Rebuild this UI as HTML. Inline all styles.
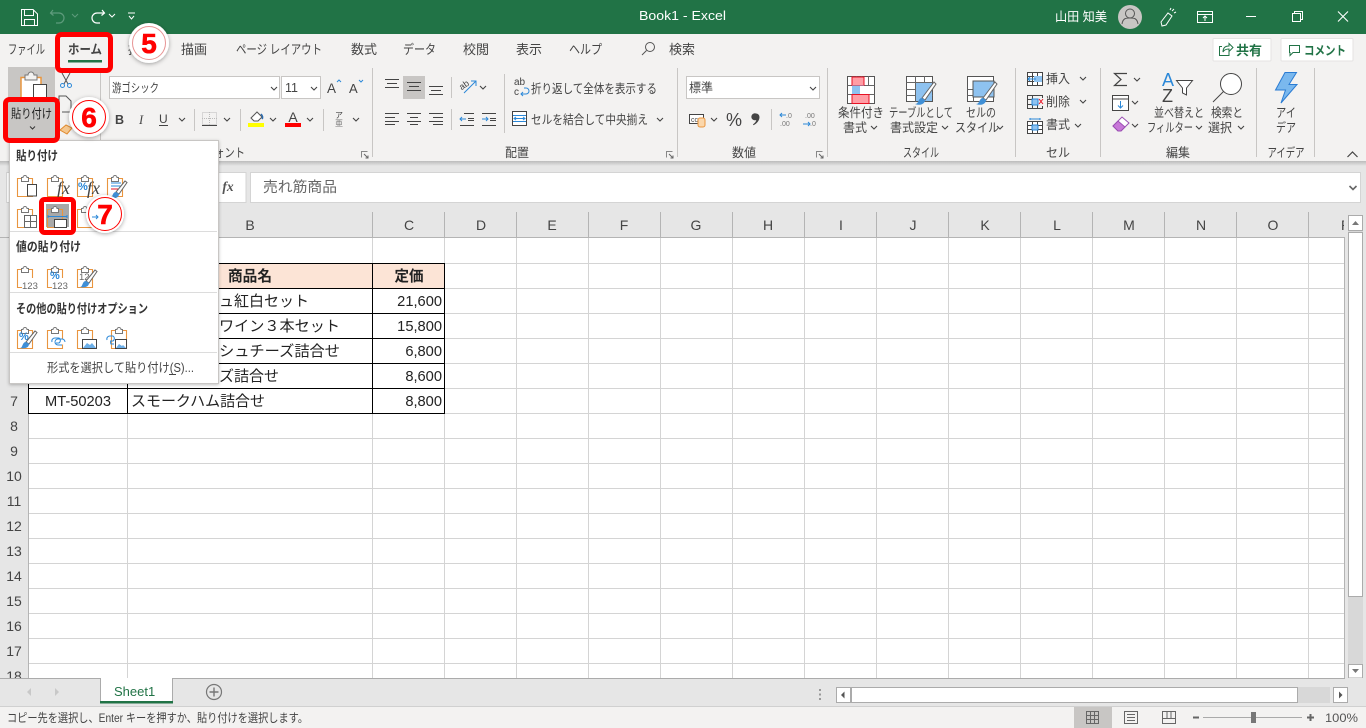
<!DOCTYPE html>
<html lang="ja"><head><meta charset="utf-8"><title>Book1 - Excel</title>
<style>
html,body{margin:0;padding:0;width:1366px;height:728px;overflow:hidden;background:#e6e6e6}
svg{display:block;position:absolute;left:0;top:0}
text{font-family:"Liberation Sans","Noto Sans CJK JP",sans-serif;font-size:12.5px;fill:#444}
.w{fill:#fff}
.c{text-anchor:middle}
.r{text-anchor:end}
.cell{font-size:14.67px;fill:#222}
.hd{font-size:14px;fill:#444;text-anchor:middle}
.b{font-weight:bold;fill:#333}
.tab{font-size:13px;fill:#444}
.big{font-size:28px;font-weight:bold;fill:#f00;stroke:#f00;stroke-width:.6px;text-anchor:middle;font-family:"Liberation Sans",sans-serif}
.ln{stroke:#444;fill:none}
</style></head><body>
<svg width="1366" height="728" viewBox="0 0 1366 728" xmlns="http://www.w3.org/2000/svg">
<defs>
<path id="ch" d="M0 0l3 3 3-3" fill="none" stroke="#444" stroke-width="1.1"/>
<g id="clip"><path d="M4 4.500H.5V22.500H15.500V4.500H12" fill="none" stroke="#e9953f" stroke-width="1.1"/><path d="M4.500 7.500V3.500H6A2 2 0 0 1 10 3.500H11.500V7.500Z" fill="#fff" stroke="#777"/></g>
<g id="brush"><path d="M6 12L15 1l2 1.500L9 14Z" fill="#fff" stroke="#666"/><path d="M0 18c3 0 2-6 6-6l3 2c0 4-5 5-9 4Z" fill="#3f8fd6"/></g>
<g id="launch"><path d="M.5 6.500V.5H6.500" fill="none" stroke="#888"/><path d="M3 3l4 4M7 4.500V7H4.500" fill="none" stroke="#666"/></g>
<filter id="sh" x="-30%" y="-30%" width="160%" height="160%"><feDropShadow dx="0" dy="1" stdDeviation="2" flood-color="#000" flood-opacity=".35"/></filter>
<filter id="ms" x="-5%" y="-5%" width="110%" height="110%"><feDropShadow dx="0" dy="1" stdDeviation="1.500" flood-color="#000" flood-opacity=".25"/></filter>
<linearGradient id="rs" x1="0" y1="0" x2="0" y2="1"><stop offset="0" stop-color="#bbb"/><stop offset="1" stop-color="#e6e6e6"/></linearGradient>
</defs>

<!-- base -->
<rect width="1366" height="728" fill="#e6e6e6"/>
<!-- title bar -->
<rect width="1366" height="34" fill="#217346"/>
<g fill="none" stroke="#fff">
<path d="M21.500 9.500H33L37.500 14V25.500H21.500Z"/><path d="M24.500 9.500V15.500H33.500V9.500M24.500 25.500V19.500H34.500V25.500"/>
</g>
<path d="M53 10l-2.500 3 3 2.500M51 13h8a5 5 0 0 1 0 10h-3" fill="none" stroke="#5e9b7c" stroke-width="1.200"/>
<path d="M72 14l3 3 3-3" fill="none" stroke="#5e9b7c"/>
<path d="M102 10l2.500 3-3 2.500M104 13h-7a5 5 0 0 0 0 10h3" fill="none" stroke="#fff" stroke-width="1.200"/>
<path d="M109 14l3 3 3-3" fill="none" stroke="#fff"/>
<path d="M128 13h7M129 16l2.500 3 2.500-3" fill="none" stroke="#fff"/>
<text class="w" x="639" y="20" textLength="87" lengthAdjust="spacingAndGlyphs">Book1  -  Excel</text>
<text class="w" x="1055" y="21" textLength="52" lengthAdjust="spacingAndGlyphs">山田 知美</text>
<circle cx="1130" cy="17" r="12" fill="#c8c6c4"/>
<circle cx="1130" cy="13.500" r="4.500" fill="none" stroke="#555"/><path d="M1122 24c1-6 4-6 8-6s7 0 8 6" fill="none" stroke="#555"/>
<g fill="none" stroke="#fff">
<path d="M1161 22l7-9 4 3-6 9-4 1ZM1170 10l1-2M1174 13l2-1M1172 11l2-2"/>
<path d="M1197.500 11.500H1212.500V22.500H1197.500ZM1197.500 14.500H1212.500M1205 21v-5M1203 18l2-2 2 2"/>
<path d="M1246 16.500H1256"/>
<path d="M1292.500 13.500H1300.500V21.500H1292.500ZM1294.500 13.500V11.500H1302.500V19.500H1300.500"/>
<path d="M1338 11.500L1348 21.500M1348 11.500L1338 21.500" stroke-width="1.100"/>
</g>

<!-- tabs + ribbon -->
<rect y="34" width="1366" height="127" fill="#f3f2f1"/>
<rect y="161" width="1366" height="5" fill="url(#rs)"/>
<text class="tab" x="8" y="54" textLength="37" lengthAdjust="spacingAndGlyphs">ファイル</text>
<text class="tab b" x="68" y="54" textLength="34" lengthAdjust="spacingAndGlyphs">ホーム</text>
<rect x="68" y="60" width="34" height="2.500" fill="#217346"/>
<text class="tab" x="128" y="54" textLength="26" lengthAdjust="spacingAndGlyphs">挿入</text>
<text class="tab" x="181" y="54" textLength="26" lengthAdjust="spacingAndGlyphs">描画</text>
<text class="tab" x="236" y="54" textLength="86" lengthAdjust="spacingAndGlyphs">ページ レイアウト</text>
<text class="tab" x="351" y="54" textLength="26" lengthAdjust="spacingAndGlyphs">数式</text>
<text class="tab" x="403" y="54" textLength="33" lengthAdjust="spacingAndGlyphs">データ</text>
<text class="tab" x="463" y="54" textLength="26" lengthAdjust="spacingAndGlyphs">校閲</text>
<text class="tab" x="516" y="54" textLength="26" lengthAdjust="spacingAndGlyphs">表示</text>
<text class="tab" x="569" y="54" textLength="33" lengthAdjust="spacingAndGlyphs">ヘルプ</text>
<circle cx="650" cy="47" r="4.500" fill="none" stroke="#555"/><path d="M646.500 50.500L642 55" stroke="#555" fill="none"/>
<text class="tab" x="669" y="54" textLength="26" lengthAdjust="spacingAndGlyphs">検索</text>
<rect x="1213" y="38.500" width="58" height="22.500" rx="1" fill="#fff" stroke="#e4e3e2"/>
<path d="M1222 46.500H1219.500V55.500H1229V52M1223 52c0-4 2-6 6-6V43.500l4 4-4 4V49c-3 0-5 1-6 3Z" fill="none" stroke="#217346"/>
<text x="1236" y="55" class="b" style="fill:#217346;font-size:13px" textLength="26" lengthAdjust="spacingAndGlyphs">共有</text>
<rect x="1281" y="38.500" width="72" height="22.500" rx="1" fill="#fff" stroke="#e4e3e2"/>
<path d="M1289.500 45.500H1299.500V52.500H1293L1290 55.500V52.500H1289.500Z" fill="none" stroke="#217346"/>
<text x="1304" y="55" class="b" style="fill:#217346;font-size:12.500px" textLength="42" lengthAdjust="spacingAndGlyphs">コメント</text>

<!-- group separators -->
<g stroke="#c8c6c4">
<path d="M100.500 68V157M372.500 68V157M677.500 68V157M827.500 68V157M1015.500 68V157M1100.500 68V157M1256.500 68V157M1314.500 68V157"/>
<path d="M194.500 109V131M240.500 109V131M323.500 109V131M451.500 77V98M451.500 109V130M504.500 74V133M771.500 109V130"/>
</g>

<!-- clipboard -->
<rect x="8" y="67" width="47" height="35" fill="#c8c6c4"/>
<path d="M21 100V77.500H41V100Z" fill="#fff" stroke="#e9953f" stroke-width="1.500"/>
<path d="M25 80V75H28A3 3 0 0 1 34 75H37V80Z" fill="#f3f2f1" stroke="#777"/>
<rect x="33.500" y="84.500" width="13" height="16" fill="#fff" stroke="#444"/>
<path d="M62 73l6 11M70 73l-6 11" stroke="#555" fill="none"/><circle cx="62.500" cy="85.500" r="2" fill="none" stroke="#2b88d8"/><circle cx="69.500" cy="85.500" r="2" fill="none" stroke="#2b88d8"/>
<path d="M59 106V96H66L71 101V112H62" fill="none" stroke="#555"/>
<path d="M60 130l6-5 6 3-5 6Z" fill="#f5c78e" stroke="#e08a2e"/>

<!-- font group -->
<rect x="109.500" y="76.500" width="170" height="22" fill="#fff" stroke="#c8c6c4"/>
<text x="112" y="92" style="font-size:12px" textLength="47" lengthAdjust="spacingAndGlyphs">游ゴシック</text>
<use href="#ch" x="271" y="87"/>
<rect x="281.500" y="76.500" width="39" height="22" fill="#fff" stroke="#c8c6c4"/>
<text x="285" y="92">11</text>
<use href="#ch" x="311" y="87"/>
<text x="327" y="93" style="font-size:13.500px">A</text><path d="M337 82l2-2 2 2" stroke="#2b88d8" fill="none"/>
<text x="349" y="93" style="font-size:13px">A</text><path d="M359 80l2 2 2-2" stroke="#2b88d8" fill="none"/>
<text x="115" y="124" style="font-size:12.500px;font-weight:bold">B</text>
<text x="139" y="124" style="font-size:12.500px;font-style:italic;font-family:'Liberation Serif',serif">I</text>
<text x="159" y="123" style="font-size:12px">U</text><path d="M159 125.500H168" stroke="#444"/>
<use href="#ch" x="179" y="118"/>
<rect x="202.500" y="112.500" width="14" height="12" fill="none" stroke="#bbb" stroke-dasharray="1 1"/><path d="M202 118.500H217M209.500 112V125" stroke="#bbb" stroke-dasharray="1 1"/><path d="M202 125.500H217" stroke="#444"/>
<use href="#ch" x="224" y="118"/>
<path d="M251 118l6-6 5 5-4 4h-4Z" fill="#fff" stroke="#555"/><path d="M261 114c2 2 2 4 1 5" stroke="#2b6cb0" fill="none" stroke-width="1.500"/><rect x="248" y="123" width="16" height="4" fill="#ff0"/>
<use href="#ch" x="270" y="118"/>
<text class="c" x="293" y="122" style="font-size:14px">A</text><rect x="285" y="123" width="16" height="4" fill="#f00"/>
<use href="#ch" x="307" y="118"/>
<text class="c" x="339" y="118" style="font-size:8px">ア</text><text class="c" x="339" y="126" style="font-size:8px;fill:#777">亜</text>
<use href="#ch" x="353" y="118"/>
<text class="r" x="245" y="157" textLength="41" lengthAdjust="spacingAndGlyphs">フォント</text>
<use href="#launch" x="361" y="151"/>

<!-- alignment -->
<rect x="403" y="76" width="22" height="23" fill="#c8c6c4"/>
<path class="ln" d="M385 79.500H399M387 83.500H397M385 87.500H399"/>
<path class="ln" d="M407 82.500H421M409 86.500H419M407 90.500H421"/>
<path class="ln" d="M429 86.500H443M431 90.500H441M429 94.500H443"/>
<path class="ln" d="M385 113.500H399M385 117.500H395M385 121.500H399M385 124.500H395"/>
<path class="ln" d="M407 113.500H421M410 117.500H418M407 121.500H421M410 124.500H418"/>
<path class="ln" d="M429 113.500H443M433 117.500H443M429 121.500H443M433 124.500H443"/>
<path class="ln" d="M464 113.500H474M468 118.500H474M468 120.500H474M460 125.500H474"/><path d="M466 119H460M462 117l-2 2 2 2" stroke="#2b88d8" fill="none"/>
<path class="ln" d="M482 113.500H496M490 118.500H496M490 120.500H496M482 125.500H496"/><path d="M482 119H488M486 117l2 2-2 2" stroke="#2b88d8" fill="none"/>
<text x="459" y="88" style="font-size:9px" transform="rotate(-35 464 85)">ab</text>
<path d="M464 93L476 81M471 81H476V86" stroke="#2b88d8" fill="none"/>
<use href="#ch" x="480" y="86"/>
<text x="514" y="85" style="font-size:10px">ab</text><text x="514" y="95" style="font-size:10px">c</text>
<path d="M521 94h5a3 3 0 0 0 0-6h-2M523 92l-2 2 2 2" stroke="#2b88d8" fill="none"/>
<text x="531" y="93" textLength="126" lengthAdjust="spacingAndGlyphs">折り返して全体を表示する</text>
<rect x="512.500" y="111.500" width="14" height="14" fill="#fff" stroke="#444"/><path d="M513 115.500H526M513 121.500H526" stroke="#2b88d8"/><path d="M514 118.500H525M516 117l-2 1.500 2 1.500M523 117l2 1.500-2 1.500" stroke="#2b88d8" fill="none"/>
<text x="531" y="124" textLength="117" lengthAdjust="spacingAndGlyphs">セルを結合して中央揃え</text>
<use href="#ch" x="657" y="118"/>
<text class="c" x="517" y="157" textLength="24" lengthAdjust="spacingAndGlyphs">配置</text>
<use href="#launch" x="666" y="151"/>

<!-- number -->
<rect x="686.500" y="76.500" width="133" height="22" fill="#fff" stroke="#c8c6c4"/>
<text x="689" y="92" textLength="24" lengthAdjust="spacingAndGlyphs">標準</text>
<use href="#ch" x="810" y="87"/>
<rect x="689.500" y="114.500" width="14" height="9" fill="#fff" stroke="#444"/><text x="691" y="122" style="font-size:7px">ccc</text>
<rect x="698" y="118" width="7" height="9" rx="2" fill="#fbd7ab" stroke="#e9953f"/>
<use href="#ch" x="711" y="118"/>
<text x="726" y="126" style="font-size:18px;font-family:'Liberation Sans',sans-serif">%</text>
<path d="M756 113.500a3.500 3.500 0 0 1 3.500 3.500c0 3.500-2.500 6.500-6 8.200l-.5-.8c1.800-1.300 3-2.700 3.300-4.400a3.500 3.500 0 1 1-.3-6.500Z" fill="#444"/>
<path d="M780 115h6M782 113l-2 2 2 2" stroke="#2b88d8" fill="none"/>
<text x="786" y="118" style="font-size:7px;fill:#777">.0</text><text x="780" y="126" style="font-size:7px;fill:#777">.00</text>
<text x="805" y="118" style="font-size:7px;fill:#777">.00</text><text x="810" y="126" style="font-size:7px;fill:#777">.0</text>
<path d="M803 124h7M808 122l2 2-2 2" stroke="#2b88d8" fill="none"/>
<text class="c" x="744" y="157" textLength="24" lengthAdjust="spacingAndGlyphs">数値</text>
<use href="#launch" x="816" y="151"/>

<!-- styles -->
<g transform="translate(847,76)">
<rect x=".5" y=".5" width="27" height="27" fill="#fff" stroke="#555"/>
<path d="M.5 9.500H27.500M.5 18.500H27.500M9.500 0V28M14.500 0V28M21.500 0V28" stroke="#666"/>
<rect x="5" y="1" width="12" height="8.500" fill="#ff9da5" stroke="#e81123"/>
<rect x="5" y="9.500" width="12" height="9" fill="#8ec2f0"/>
<rect x="5" y="18.500" width="17" height="9" fill="#ff9da5" stroke="#e81123"/>
<rect x="13" y="10" width="9" height="8" fill="#fff"/>
</g>
<g transform="translate(906,76)">
<rect x=".5" y=".5" width="26" height="25" fill="#fff" stroke="#555"/>
<path d="M.5 6.500H26.500M.5 13.500H26.500M.5 19.500H26.500M9.500 0V26M18.500 0V26" stroke="#666"/>
<rect x="10" y="7" width="16" height="18" fill="#8ec2f0"/>
<path d="M16 22L28 6l2 2-11 16Z" fill="#fff" stroke="#666"/><path d="M9 28c4 0 3-6 7-6l3 2c0 4-5 6-10 4Z" fill="#3f8fd6"/>
</g>
<g transform="translate(967,76)">
<rect x=".5" y=".5" width="26" height="25" fill="#fff" stroke="#555"/>
<path d="M.5 19.500H26.500M6.500 6V26M.5 13.500H6" stroke="#666"/>
<rect x="6" y="5" width="21" height="16" fill="#8ec2f0" stroke="#555"/>
<path d="M16 22L28 6l2 2-11 16Z" fill="#fff" stroke="#666"/><path d="M9 28c4 0 3-6 7-6l3 2c0 4-5 6-10 4Z" fill="#3f8fd6"/>
</g>
<text class="c" x="861" y="117" textLength="46" lengthAdjust="spacingAndGlyphs">条件付き</text>
<text class="c" x="855" y="132" textLength="24" lengthAdjust="spacingAndGlyphs">書式</text><use href="#ch" x="871" y="126"/>
<text class="c" x="921" y="117" textLength="64" lengthAdjust="spacingAndGlyphs">テーブルとして</text>
<text class="c" x="914" y="132" textLength="48" lengthAdjust="spacingAndGlyphs">書式設定</text><use href="#ch" x="942" y="126"/>
<text class="c" x="981" y="117" textLength="30" lengthAdjust="spacingAndGlyphs">セルの</text>
<text class="c" x="977" y="132" textLength="44" lengthAdjust="spacingAndGlyphs">スタイル</text><use href="#ch" x="997" y="126"/>
<text class="c" x="921" y="157" textLength="36" lengthAdjust="spacingAndGlyphs">スタイル</text>

<!-- cells -->
<g transform="translate(1027,72)" fill="none" stroke="#444">
<rect x=".5" y=".5" width="15" height="13" fill="#fff"/><path d="M0 4.500H16M0 9.500H16M5.500 0V14M10.500 0V14"/>
<rect x="7" y="4" width="8" height="6" fill="#8ec2f0" stroke="none"/>
<path d="M9 7H1M3 5L1 7l2 2" stroke="#2b88d8"/>
</g>
<g transform="translate(1027,95)" fill="none" stroke="#444">
<path d="M.5 .5H15.500M.5 4.500H5M.5 9.500H5M.5 13.500H15.500M.5 0V14M15.500 0V3M15.500 11V14M5.500 0V14M10.500 10V14"/>
<rect x="5" y="4" width="6" height="6" fill="#8ec2f0" stroke="#2b88d8"/>
<path d="M12 4l4 5M16 4l-4 5" stroke="#e81123"/>
</g>
<g transform="translate(1027,118)" fill="none" stroke="#444">
<rect x=".5" y="3.500" width="15" height="12" fill="#fff"/><path d="M0 7.500H16M0 11.500H16M5.500 4V16M10.500 4V16"/>
<rect x="5" y="7" width="6" height="5" fill="#8ec2f0" stroke="#2b88d8"/>
<path d="M3 1H13M3 0V2M13 0V2" stroke="#2b88d8"/>
</g>
<text x="1046" y="83" textLength="24" lengthAdjust="spacingAndGlyphs">挿入</text><use href="#ch" x="1080" y="77"/>
<text x="1046" y="106" textLength="24" lengthAdjust="spacingAndGlyphs">削除</text><use href="#ch" x="1080" y="100"/>
<text x="1046" y="129" textLength="24" lengthAdjust="spacingAndGlyphs">書式</text><use href="#ch" x="1075" y="124"/>
<text class="c" x="1058" y="157" textLength="24" lengthAdjust="spacingAndGlyphs">セル</text>

<!-- editing -->
<path d="M1127 73.500H1114.500L1121 79.500L1114.500 85.500H1127" fill="none" stroke="#444" stroke-width="1.200"/>
<use href="#ch" x="1134" y="78"/>
<rect x="1112.500" y="95.500" width="16" height="15" fill="#fff" stroke="#444"/><path d="M1113 99H1128" stroke="#444"/><path d="M1120.500 101V108M1118 105.500l2.500 2.500 2.500-2.500" stroke="#2b88d8" fill="none"/>
<use href="#ch" x="1132" y="101"/>
<path d="M1113 126l9-9 7 6-8 8h-3Z" fill="#fff" stroke="#9a4fb3"/><path d="M1113 126l5-5 7 6-4 4h-3Z" fill="#c777d8" stroke="#9a4fb3"/>
<use href="#ch" x="1132" y="124"/>
<text x="1162" y="86" style="font-size:18px;fill:#2b88d8;font-family:'Liberation Sans',sans-serif">A</text>
<text x="1162" y="102" style="font-size:18px;fill:#444;font-family:'Liberation Sans',sans-serif">Z</text>
<path d="M1176.500 80.500H1192.500L1186.500 88V95L1182.500 93V88Z" fill="#fff" stroke="#444"/>
<text class="c" x="1179" y="117" textLength="50" lengthAdjust="spacingAndGlyphs">並べ替えと</text>
<text class="c" x="1170" y="132" textLength="46" lengthAdjust="spacingAndGlyphs">フィルター</text><use href="#ch" x="1196" y="126"/>
<circle cx="1231" cy="84" r="10.500" fill="#fff" stroke="#444"/><path d="M1223.500 91.500L1213 102" stroke="#444" fill="none"/>
<text class="c" x="1227" y="117" textLength="32" lengthAdjust="spacingAndGlyphs">検索と</text>
<text class="c" x="1220" y="132" textLength="24" lengthAdjust="spacingAndGlyphs">選択</text><use href="#ch" x="1238" y="126"/>
<text class="c" x="1178" y="157" textLength="24" lengthAdjust="spacingAndGlyphs">編集</text>

<!-- ideas -->
<path d="M1285 72.500H1296.500L1289 84.500H1297L1281 103L1285.500 90H1275.500Z" fill="#7ab8ee" stroke="#2b7cd3"/>
<text class="c" x="1286" y="117" textLength="20" lengthAdjust="spacingAndGlyphs">アイ</text>
<text class="c" x="1286" y="132" textLength="20" lengthAdjust="spacingAndGlyphs">デア</text>
<text class="c" x="1286" y="157" textLength="37" lengthAdjust="spacingAndGlyphs">アイデア</text>
<path d="M1347.500 157l5-5 5 5" fill="none" stroke="#444" stroke-width="1.200"/>

<!-- formula bar -->
<rect x="6.500" y="172.500" width="210" height="30" fill="#fff" stroke="#d4d4d4"/>
<rect x="250.500" y="172.500" width="1110" height="30" fill="#fff" stroke="#d4d4d4"/>
<rect x="216" y="172.500" width="30" height="30" fill="#fff" stroke="#d4d4d4"/>
<text class="c" x="228" y="191" style="font-size:13.500px;font-weight:bold;font-style:italic;font-family:'Liberation Serif',serif;fill:#555">fx</text>
<text x="263" y="192" style="font-size:14.500px;fill:#666" textLength="74" lengthAdjust="spacingAndGlyphs">売れ筋商品</text>
<path d="M1349.500 186l3.500 3.500 3.500-3.500" fill="none" stroke="#666" stroke-width="1.600"/>

<!-- sheet grid -->
<rect x="28" y="238" width="1316" height="440" fill="#fff"/>
<g stroke="#d4d4d4">
<path d="M28 263.500H1344M28 288.500H1344M28 313.500H1344M28 338.500H1344M28 363.500H1344M28 388.500H1344M28 413.500H1344M28 438.500H1344M28 463.500H1344M28 488.500H1344M28 513.500H1344M28 538.500H1344M28 563.500H1344M28 588.500H1344M28 613.500H1344M28 638.500H1344M28 663.500H1344"/>
<path d="M127.500 238V678M372.500 238V678M444.500 238V678M516.500 238V678M588.500 238V678M660.500 238V678M732.500 238V678M804.500 238V678M876.500 238V678M948.500 238V678M1020.500 238V678M1092.500 238V678M1164.500 238V678M1236.500 238V678M1308.500 238V678"/>
</g>
<!-- headers -->
<g stroke="#b4b4b4">
<path d="M0 237.500H1345M28.500 212V678M1344.500 237V678"/>
<path d="M127.500 212V237M372.500 212V237M444.500 212V237M516.500 212V237M588.500 212V237M660.500 212V237M732.500 212V237M804.500 212V237M876.500 212V237M948.500 212V237M1020.500 212V237M1092.500 212V237M1164.500 212V237M1236.500 212V237M1308.500 212V237"/>
</g>
<text class="hd" x="78" y="230">A</text>
<text class="hd" x="250" y="230">B</text><text class="hd" x="409" y="230">C</text><text class="hd" x="481" y="230">D</text><text class="hd" x="552" y="230">E</text><text class="hd" x="624" y="230">F</text><text class="hd" x="696" y="230">G</text><text class="hd" x="768" y="230">H</text><text class="hd" x="841" y="230">I</text><text class="hd" x="913" y="230">J</text><text class="hd" x="985" y="230">K</text><text class="hd" x="1057" y="230">L</text><text class="hd" x="1129" y="230">M</text><text class="hd" x="1201" y="230">N</text><text class="hd" x="1273" y="230">O</text>
<svg x="1330" y="212" width="14" height="25"><text x="11" y="18" style="font-size:14px">P</text></svg>
<text class="hd" x="14" y="256">1</text><text class="hd" x="14" y="281">2</text><text class="hd" x="14" y="306">3</text><text class="hd" x="14" y="331">4</text><text class="hd" x="14" y="356">5</text><text class="hd" x="14" y="381">6</text><text class="hd" x="14" y="406">7</text><text class="hd" x="14" y="431">8</text><text class="hd" x="14" y="456">9</text><text class="hd" x="14" y="481">10</text><text class="hd" x="14" y="506">11</text><text class="hd" x="14" y="531">12</text><text class="hd" x="14" y="556">13</text><text class="hd" x="14" y="581">14</text><text class="hd" x="14" y="606">15</text><text class="hd" x="14" y="631">16</text><text class="hd" x="14" y="656">17</text>
<svg x="0" y="664" width="28" height="14"><text class="hd" x="14" y="17">18</text></svg>

<!-- table -->
<rect x="28" y="264" width="416" height="24" fill="#fce4d6"/>
<g stroke="#000">
<path d="M28 263.500H445M28 288.500H445M28 313.500H445M28 338.500H445M28 363.500H445M28 388.500H445M28 413.500H445"/>
<path d="M28.500 263V414M127.500 263V414M372.500 263V414M444.500 263V414"/>
</g>
<text class="cell b c" x="250" y="281" style="fill:#222" textLength="44" lengthAdjust="spacingAndGlyphs">商品名</text>
<text class="cell b c" x="409" y="281" style="fill:#222" textLength="29" lengthAdjust="spacingAndGlyphs">定価</text>
<text class="cell" x="219" y="306" textLength="90" lengthAdjust="spacingAndGlyphs">ュ紅白セット</text>
<text class="cell" x="219" y="331" textLength="121" lengthAdjust="spacingAndGlyphs">ワイン３本セット</text>
<text class="cell" x="219" y="356" textLength="121" lengthAdjust="spacingAndGlyphs">シュチーズ詰合せ</text>
<text class="cell" x="219" y="381" textLength="60" lengthAdjust="spacingAndGlyphs">ズ詰合せ</text>
<text class="cell" x="131" y="406" textLength="134" lengthAdjust="spacingAndGlyphs">スモークハム詰合せ</text>
<text class="cell c" x="78" y="406">MT-50203</text>
<text class="cell r" x="442" y="306">21,600</text><text class="cell r" x="442" y="331">15,800</text><text class="cell r" x="442" y="356">6,800</text><text class="cell r" x="442" y="381">8,600</text><text class="cell r" x="442" y="406">8,800</text>

<!-- vertical scrollbar -->
<rect x="1348" y="231" width="15" height="433" fill="#d8d8d8"/>
<rect x="1348.500" y="215.500" width="14" height="15" fill="#fff" stroke="#ababab"/>
<path d="M1352 225l3.500-4 3.500 4Z" fill="#777"/>
<rect x="1348.500" y="232.500" width="14" height="364" fill="#fff" stroke="#ababab"/>
<rect x="1348.500" y="664.500" width="14" height="13.500" fill="#fff" stroke="#ababab"/>
<path d="M1352 669l3.500 4 3.500-4Z" fill="#777"/>

<!-- sheet tab bar -->
<rect y="678" width="1366" height="28" fill="#e6e6e6"/>
<path d="M0 678.500H1345" stroke="#ababab"/>
<path d="M31 688v8l-4-4ZM55 688v8l4-4Z" fill="#c8c8c8"/>
<path d="M100.500 678V702H172.500V678" fill="#fff" stroke="#ababab"/>
<rect x="101" y="678" width="71" height="1" fill="#fff"/>
<rect x="100" y="701" width="73" height="2.500" fill="#217346"/>
<text x="114" y="696" style="font-size:13px;fill:#217346;font-family:'Liberation Sans',sans-serif">Sheet1</text>
<circle cx="214" cy="692" r="7.500" fill="none" stroke="#777" stroke-width="1.200"/><path d="M209.500 692H218.500M214 687.500V696.500" stroke="#777" stroke-width="1.400"/>
<path d="M820 689v2M820 693.500v2M820 698v2" stroke="#999" stroke-width="2"/>
<rect x="1298" y="687" width="32" height="16" fill="#d8d8d8"/>
<rect x="836.500" y="687.500" width="14" height="15" fill="#fff" stroke="#ababab"/>
<path d="M844.500 691.500v7l-3.500-3.500Z" fill="#555"/>
<rect x="851.500" y="687.500" width="446" height="15" fill="#fff" stroke="#ababab"/>
<rect x="1333.500" y="687.500" width="14" height="15" fill="#fff" stroke="#ababab"/>
<path d="M1339 691.500v7l3.500-3.500Z" fill="#555"/>

<!-- status bar -->
<rect y="706" width="1366" height="22" fill="#f3f2f1"/>
<path d="M0 706.500H1366" stroke="#d0d0d0"/>
<text x="7" y="722" style="font-size:12px" textLength="301" lengthAdjust="spacingAndGlyphs">コピー先を選択し、Enter キーを押すか、貼り付けを選択します。</text>
<rect x="1074" y="707" width="38" height="21" fill="#c8c6c4"/>
<path d="M1086.500 711.500H1098.500V723.500H1086.500ZM1086.500 715.500H1098.500M1086.500 719.500H1098.500M1090.500 711.500V723.500M1094.500 711.500V723.500" fill="none" stroke="#666"/>
<path d="M1124.500 711.500H1137.500V723.500H1124.500ZM1127 714.500H1135M1127 717.500H1135M1127 720.500H1135" fill="none" stroke="#666"/>
<path d="M1162.500 711.500H1175.500V723.500H1162.500ZM1162.500 718.500H1175.500M1167 711.500V718M1171 711.500V718" fill="none" stroke="#666"/>
<path d="M1193 717.500H1199" stroke="#666" stroke-width="2"/>
<path d="M1203 717.500H1302" stroke="#aaa"/>
<rect x="1251" y="712" width="5" height="11" fill="#777"/>
<path d="M1307 717.500H1314M1310.500 714V721" stroke="#666" stroke-width="2"/>
<text x="1325" y="722" style="font-size:12px;fill:#555;font-family:'Liberation Sans',sans-serif" textLength="33" lengthAdjust="spacingAndGlyphs">100%</text>

<!-- paste dropdown -->
<rect x="9.500" y="140.500" width="209" height="243" fill="#fff" stroke="#c8c6c4" filter="url(#ms)"/>
<text x="16" y="160" class="b" textLength="42" lengthAdjust="spacingAndGlyphs">貼り付け</text>
<text x="16" y="251" class="b" textLength="65" lengthAdjust="spacingAndGlyphs">値の貼り付け</text>
<text x="16" y="313" class="b" textLength="132" lengthAdjust="spacingAndGlyphs">その他の貼り付けオプション</text>
<path d="M10 231.500H217M10 292.500H217M10 352.500H217" stroke="#dcdcdc"/>
<text x="47" y="372" textLength="147" lengthAdjust="spacingAndGlyphs">形式を選択して貼り付け(S)...</text>
<path d="M169 374.500H176" stroke="#444"/>

<!-- row 1 icons -->
<use href="#clip" x="17" y="174"/><rect x="27.500" y="184.500" width="9" height="11.500" fill="#fff" stroke="#444"/>
<use href="#clip" x="47" y="174"/>
<text x="57" y="194" style="font-size:18px;font-style:italic;font-family:'Liberation Serif',serif;fill:#444">fx</text>
<use href="#clip" x="77" y="174"/>
<text x="78" y="190" style="font-size:11px;fill:#2b88d8;font-family:'Liberation Sans',sans-serif;font-weight:bold">%</text>
<text x="87" y="194" style="font-size:18px;font-style:italic;font-family:'Liberation Serif',serif;fill:#444">fx</text>
<use href="#clip" x="107" y="174"/>
<path d="M111 183H121M111 186H121" stroke="#2b88d8"/><path d="M111 189H118" stroke="#e81123"/>
<use href="#brush" x="110" y="180"/>
<!-- row 2 -->
<use href="#clip" x="17" y="205"/><rect x="24.500" y="215.500" width="12" height="12" fill="#fff" stroke="#666"/><path d="M24.500 221.500H36.500M30.500 215.500V227.500" stroke="#666"/>
<rect x="46" y="204" width="23" height="23" fill="#a8a8a8"/>
<use href="#clip" x="47" y="205"/><rect x="47.500" y="209.500" width="15" height="18" fill="#fff" fill-opacity="0"/>
<path d="M48 216.500H67M48 215v3M67 215v3" stroke="#2b88d8"/><rect x="54.500" y="219.500" width="12" height="8" fill="#fff" stroke="#444"/>
<use href="#clip" x="77" y="205"/>

<!-- row 3 paste values -->
<use href="#clip" x="17" y="265"/><rect x="22" y="278" width="16" height="11" fill="#fff"/><text x="22" y="289" style="font-size:9.500px;font-family:'Liberation Sans',sans-serif;fill:#666">123</text>
<use href="#clip" x="47" y="265"/><rect x="52" y="278" width="16" height="11" fill="#fff"/><text x="50" y="279" style="font-size:11px;fill:#2b88d8;font-family:'Liberation Sans',sans-serif;font-weight:bold">%</text><text x="52" y="289" style="font-size:9.500px;font-family:'Liberation Sans',sans-serif;fill:#666">123</text>
<use href="#clip" x="77" y="265"/><text x="79" y="280" style="font-size:9.500px;font-family:'Liberation Sans',sans-serif;fill:#666">12</text><use href="#brush" x="80" y="269"/>

<!-- row 4 other -->
<use href="#clip" x="17" y="326"/><text x="19" y="340" style="font-size:11px;fill:#2b88d8;font-family:'Liberation Sans',sans-serif;font-weight:bold">%</text><use href="#brush" x="20" y="330"/>
<use href="#clip" x="47" y="326"/><path d="M52 342a3 3 0 0 1 3-4h4a3 3 0 0 1 0 5h-3M65 342a3 3 0 0 0-3-3h-4a3 3 0 0 0 0 6h4" fill="#fff" stroke="#2b88d8"/>
<use href="#clip" x="77" y="326"/><rect x="82.500" y="339.500" width="14" height="9" fill="#fff" stroke="#444"/><path d="M83 348l4-5 3 2 2-2 4 5Z" fill="#6aaee8"/>
<use href="#clip" x="111" y="326"/><path d="M107 340a3 3 0 0 1 3-4h3a3 3 0 0 1 0 5h-3M114 344h-3a3 3 0 0 1 0-3" fill="none" stroke="#2b88d8"/><rect x="115.500" y="339.500" width="11" height="9" fill="#fff" stroke="#444"/><path d="M116 348l3-4 3 2 1-1 3 3Z" fill="#6aaee8"/>

<!-- annotations -->
<rect x="57.500" y="34.500" width="53" height="36" rx="4" fill="none" stroke="#f00" stroke-width="5"/>
<rect x="5.500" y="99.500" width="52" height="41" rx="4" fill="#c8c6c4" stroke="#f00" stroke-width="5"/>
<text class="c" x="31.500" y="118" style="fill:#222" textLength="41" lengthAdjust="spacingAndGlyphs">貼り付け</text>
<path d="M30 126.500l2.500 2.500 2.500-2.500" fill="none" stroke="#333"/>
<rect x="41.500" y="199.500" width="32" height="33" rx="3" fill="none" stroke="#f00" stroke-width="5"/>

<g>
<circle cx="149" cy="43" r="20" fill="#fff" filter="url(#sh)"/><circle cx="149" cy="43" r="16.500" fill="none" stroke="#d66" stroke-opacity=".7"/>
<text class="big" x="149" y="53">5</text>
<circle cx="89" cy="117" r="20" fill="#fff" filter="url(#sh)"/><circle cx="89" cy="117" r="16.500" fill="none" stroke="#f00"/>
<text class="big" x="89" y="127">6</text>
<circle cx="105" cy="214" r="19" fill="#fff" filter="url(#sh)"/><circle cx="105" cy="214" r="16.500" fill="none" stroke="#f00"/>
<path d="M92 217h6M96 215l2 2-2 2" stroke="#2b88d8" fill="none"/>
<text class="big" x="105" y="224">7</text>
</g>
</svg>
</body></html>
